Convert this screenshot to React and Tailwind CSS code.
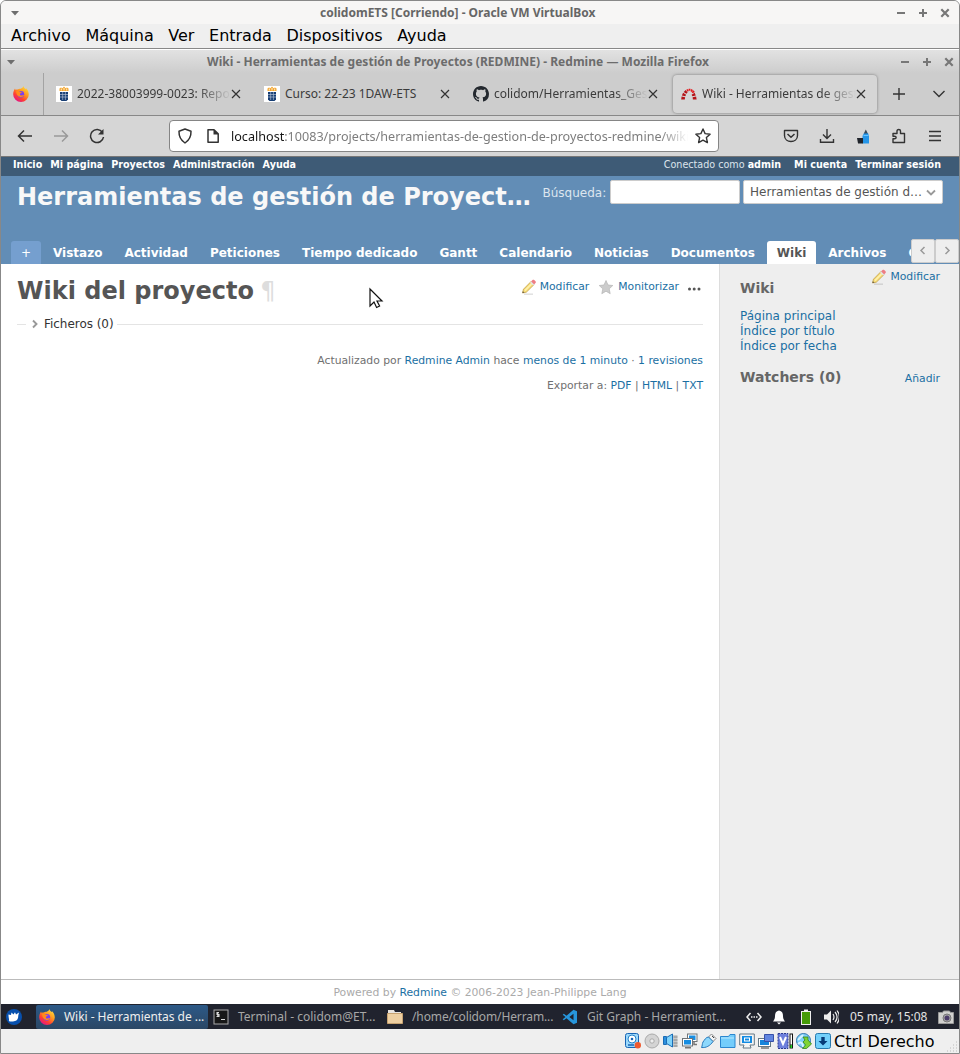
const noto = "font-['Noto_Sans',sans-serif]";

function Ico({ w = 16, h = 16, vb, className = '', children }) {
  return (
    <svg width={w} height={h} viewBox={vb || `0 0 ${w} ${h}`} className={`block shrink-0 ${className}`} fill="none">
      {children}
    </svg>
  );
}

function Caret() {
  return <Ico w={10} h={6}><path d="M1 1h8L5 5.400z" fill="#6e6e6e" /></Ico>;
}

function WindowButtons({ className = '' }) {
  return (
    <div className={`flex gap-3 ${className}`}>
      <Ico w={10} h={10}><path d="M1 5h8" stroke="#777" strokeWidth="2" /></Ico>
      <Ico w={10} h={10}><path d="M1 5h8M5 1v8" stroke="#777" strokeWidth="2" /></Ico>
      <Ico w={10} h={10}><path d="M1.300 1.300l7.400 7.400M8.700 1.300L1.300 8.700" stroke="#777" strokeWidth="2.200" /></Ico>
    </div>
  );
}

function Firefox({ size = 16 }) {
  return (
    <Ico w={size} h={size} vb="0 0 16 16">
      <defs>
        <linearGradient id="fox" x1="1" y1="0" x2="0.3" y2="1">
          <stop offset="0" stopColor="#fff04a" /><stop offset=".45" stopColor="#ff9a1f" /><stop offset=".75" stopColor="#ff4030" /><stop offset="1" stopColor="#e31587" />
        </linearGradient>
      </defs>
      <path d="M10.500 0c.3 1.400 1.100 2.100 2 3 .5-.2.6-.7.6-.7C14.700 4 15.800 6 15.800 8.500A7.800 7.500 0 0 1 .2 8.500C.1 6 1 4 2 2.500l.7 1.400c.6-.5 1.200-.5 1.800-.4C6 2.400 9.500 3.500 10.500 0z" fill="url(#fox)" />
      <circle cx="7.800" cy="8.300" r="3.400" fill="#7b3ff0" />
      <path d="M3 5c1.500-.5 3-.3 3.900.8l2.100.2c-.4 1-1.500 1-1.900 1.700-.4.900-.1 1.700 1.100 1.800 1.300.1 2-1 2.900-.4-.6 2-4 3.200-6 1C3.600 8.600 3.300 7 3 5z" fill="#ff8a1c" />
    </Ico>
  );
}

function Crest() {
  return (
    <Ico>
      <rect width="16" height="16" fill="#fff" />
      <path d="M3.500 5V2.500l1.500-1 1.500.7L8 .5l1.500 1.700 1.500-.7 1.500 1V5z" fill="#f3a52b" />
      <path d="M5.300 2.500v2M8 2v2.500M10.700 2.500v2" stroke="#fff" strokeWidth=".8" />
      <path d="M4 6h8v7.500L10.500 15h-5L4 13.500z" fill="#173e74" />
      <path d="M4 8.500h8M4 11h8M6.700 6v8M9.400 6v8" stroke="#c4cfdf" strokeWidth=".6" />
    </Ico>
  );
}

function Github() {
  return (
    <Ico vb="0 0 16 16"><path fill="#24292f" d="M8 0C3.580 0 0 3.580 0 8c0 3.540 2.290 6.530 5.470 7.590.4.070.550-.170.550-.380 0-.190-.010-.820-.010-1.490-2.010.370-2.530-.490-2.690-.940-.090-.230-.480-.940-.820-1.130-.280-.150-.680-.520-.010-.530.630-.010 1.080.580 1.230.820.720 1.210 1.870.870 2.330.660.070-.520.280-.870.510-1.070-1.780-.2-3.640-.890-3.640-3.950 0-.870.310-1.590.820-2.150-.080-.2-.360-1.020.080-2.120 0 0 .670-.210 2.200.820.640-.180 1.320-.270 2-.270s1.360.090 2 .270c1.530-1.040 2.200-.820 2.200-.820.440 1.100.160 1.920.080 2.120.510.560.820 1.270.820 2.150 0 3.070-1.870 3.750-3.650 3.950.290.250.540.730.540 1.480 0 1.070-.010 1.930-.010 2.200 0 .210.150.460.550.380A8.010 8.010 0 0 0 16 8c0-4.420-3.580-8-8-8z" /></Ico>
  );
}

function RedmineLogo() {
  return (
    <Ico>
      <path d="M.2 13.500l.4-3 3.500.8-.3 2.200zM.9 9.500l1.200-2.700 3 1.900-.8 1.500zM2.700 6l2-1.900 1.900 2.500-1.200 1.100zM11.900 13.500l-.3-2.200 3.500-.8.500 3zM11.400 10.200l-.8-1.500 3-1.900 1.200 2.700z" fill="#b51419" />
      <path d="M5.200 3.700l1.900-.8.700 2.200-1.200.6zM7.600 2.800h1.900l-.3 2h-1zM10 2.900l2 1-1.200 2-1.200-.7zM12.500 4.200l1.300 1.700-2.100 1.400-1-1.100z" fill="#e3191c" />
    </Ico>
  );
}

function CloseX() {
  return <Ico w={10} h={10}><path d="M1 1l8 8M9 1L1 9" stroke="#333" strokeWidth="1.200" /></Ico>;
}

const fade = '[mask-image:linear-gradient(to_right,#000_78%,transparent)]';

function BrowserTab({ icon, title, className, textWidth, faded }) {
  return (
    <div className={`flex h-[38px] shrink-0 items-center ${className}`}>
      {icon}
      <span className={`ml-[5px] overflow-hidden whitespace-nowrap text-[12px] leading-[18px] text-[#3b3b3b] ${textWidth} ${faded ? fade : ''}`}>{title}</span>
      <CloseX />
    </div>
  );
}

function Pencil() {
  return (
    <Ico>
      <path d="M3 15.200h9" stroke="#000" strokeOpacity=".12" strokeWidth="1.500" />
      <path d="M1.500 14l1-3.800L10 2.600l3 3-7.600 7.500z" fill="#f8df7c" stroke="#c09a3e" strokeWidth=".8" />
      <path d="M4 11.500l7.300-7.300" stroke="#fff3b5" strokeWidth="1.200" />
      <path d="M10 2.600L11.500 1c.5-.5 1.200-.5 1.700 0l1.300 1.300c.5.500.5 1.200 0 1.700L13 5.600z" fill="#ee7d83" />
      <path d="M9.600 3l3 3" stroke="#dfe3ea" strokeWidth="1.400" />
      <path d="M1.500 14l.4-1.700 1.300 1.300z" fill="#444" />
    </Ico>
  );
}

const projectTabs = ['Vistazo', 'Actividad', 'Peticiones', 'Tiempo dedicado', 'Gantt', 'Calendario', 'Noticias', 'Documentos', 'Wiki', 'Archivos', 'Configuración'];

function VmStatusIcons() {
  return (
    <div className="flex gap-[3px]">
      <Ico>
        <rect x=".5" y=".5" width="13" height="14" rx="2" fill="#9bd8fb" stroke="#1764b5" />
        <circle cx="7" cy="6" r="4" fill="#fff" stroke="#2581c8" /><circle cx="7" cy="6" r="1.300" fill="#1764b5" />
        <path d="M3 12h6" stroke="#1764b5" strokeWidth="1.500" /><circle cx="12.800" cy="12.300" r="3.200" fill="#ef5a2f" />
      </Ico>
      <Ico><circle cx="8" cy="8" r="7" fill="#d4d4d4" stroke="#aaa" /><circle cx="8" cy="8" r="2.200" fill="#eee" stroke="#aaa" /></Ico>
      <Ico>
        <path d="M9 2h5.500v12H8z" fill="#c6c9ca" /><path d="M10.500 4h4M10.500 7h4M10.500 10h4M10.500 13h4" stroke="#888" />
        <path d="M.5 3.500h3v8h-3z" fill="#2c8fdd" stroke="#1a6cb5" /><path d="M3.500 4.500l6-3.500v13l-6-3.500z" fill="#7fd3fb" stroke="#1a6cb5" />
      </Ico>
      <Ico>
        <rect x="5.500" y="1" width="9.500" height="7.500" fill="#fff" stroke="#6f7478" /><rect x="7" y="2.500" width="6.500" height="4.500" fill="#168de2" /><path d="M12 9v2.500h3" stroke="#777" strokeWidth="1.500" />
        <rect x=".5" y="5.500" width="10" height="7.500" fill="#fff" stroke="#6f7478" /><rect x="2" y="7" width="7" height="4.500" fill="#168de2" /><path d="M3 14.700h6" stroke="#777" strokeWidth="1.600" />
      </Ico>
      <Ico><path d="M10.500 1L15 5.500l-3 3L7.500 4z" fill="#f3f3f3" stroke="#888" /><path d="M7.500 4C5 4 3.500 7 2 9c-1 2-.5 3.500-1.500 5.500C5 15 9 13 12 8.500z" fill="#8dd8fc" stroke="#2779bd" /><path d="M11 3l.9.900M13 5l-.9-.9" stroke="#333" /></Ico>
      <Ico><path d="M.5 14.500V3.500h8l1.500-2h5v13z" fill="#74cdfb" stroke="#2b86cf" /><path d="M1 5h13" stroke="#b9e8ff" /></Ico>
      <Ico><path d="M.7 1h14.600v11H11l1 3H4l1-3H.7z" fill="#f5f5f5" stroke="#667985" /><rect x="3" y="3" width="10" height="7" fill="#138be2" /><rect x="5.500" y="5" width="5" height="3" fill="#138be2" stroke="#fff" /></Ico>
      <Ico><rect x=".5" y="5.500" width="12" height="8" fill="#fff" stroke="#667985" /><rect x="2" y="7" width="9" height="5" fill="#1685db" /><path d="M3 15h8" stroke="#777" strokeWidth="1.500" /><path d="M6.500 1.500h9v7h-9z" fill="#6286e0" stroke="#3851a9" /></Ico>
      <Ico><rect x="1" y=".5" width="10" height="15" fill="#6d7fdc" stroke="#2c3b91" strokeDasharray="2 1" /><path d="M3 4l3 7 3-7" stroke="#fff" strokeWidth="2" /><rect x="12.500" y=".5" width="3.500" height="15" fill="#111" /><rect x="13.500" y="1.500" width="1.500" height="10" fill="#fff" /><rect x="13.500" y="12" width="1.500" height="3" fill="#20d820" /></Ico>
      <Ico><circle cx="7.500" cy="7.500" r="7" fill="#7fd0f8" stroke="#3276ad" /><path d="M7 2c-2 2-3 3-5 5M2 11c3-3 5-1 5 3" stroke="#d6f2ff" strokeWidth="2" /><path d="M7 4h5v3l3.500 4-5 4.500H6.500L9.500 12 7 9l2-2z" fill="#80d334" stroke="#2f841d" strokeWidth=".8" /></Ico>
      <Ico><rect x=".5" y=".5" width="15" height="15" rx="2" fill="#74d0fb" stroke="#2779ae" /><path d="M6.300 4h3.400v4h2.800L8 12.500 3.500 8h2.800z" fill="#073b78" /></Ico>
    </div>
  );
}

function TaskLabel({ children, className }) {
  return <span className={`whitespace-nowrap text-[12px] leading-[18px] ${className}`}>{children}</span>;
}

export default function App() {
  return (
    <div className="h-[1054px] w-[960px] overflow-hidden bg-white">
      <div className="flex h-[1054px] w-[960px] flex-col overflow-hidden rounded-t-[6px] border border-[#888] bg-[#efefef] font-['DejaVu_Sans',sans-serif]">
        <div className={`flex h-[23px] shrink-0 items-center bg-[#f7f6f5] pl-[9px] pt-px ${noto}`}>
          <Caret />
          <span className="ml-[300px] whitespace-nowrap text-[12px] font-bold leading-[18px] text-[#666]">colidomETS [Corriendo] - Oracle VM VirtualBox</span>
          <WindowButtons className="ml-auto mr-[9px]" />
        </div>
        <div className="flex h-[25px] shrink-0 items-center gap-[14.600px] border-b border-[#888] pb-px pl-[10px] text-[16px] leading-5 text-black">
          <span>Archivo</span><span>Máquina</span><span>Ver</span><span>Entrada</span><span>Dispositivos</span><span>Ayuda</span>
        </div>
        <div className={`flex h-[24px] shrink-0 items-center border-t border-white bg-gradient-to-b from-[#e2e2e2] to-[#cdcdcd] pl-[5px] ${noto}`}>
          <Caret />
          <span className="ml-[191px] whitespace-nowrap text-[12px] font-bold leading-[18px] tracking-[0.025px] text-[#6c6c6c]">Wiki - Herramientas de gestión de Proyectos (REDMINE) - Redmine — Mozilla Firefox</span>
          <WindowButtons className="ml-auto mr-[5px]" />
        </div>
        <div className={`flex h-[43px] shrink-0 items-center border-b border-[#888] bg-[#cdcdcd] ${noto}`}>
          <div className="flex h-[42px] w-[43px] items-center border-r border-[#a3a3a3] pl-[12px]"><Firefox /></div>
          <BrowserTab icon={<Crest />} title="2022-38003999-0023: Repositorio" className="w-[208px] pl-[12px]" textWidth="w-[154px]" faded />
          <BrowserTab icon={<Crest />} title="Curso: 22-23 1DAW-ETS" className="w-[209px] pl-[12px]" textWidth="w-[155px]" />
          <BrowserTab icon={<Github />} title="colidom/Herramientas_Gestion" className="w-[212px] pl-[12px]" textWidth="w-[154px]" faded />
          <BrowserTab icon={<RedmineLogo />} title="Wiki - Herramientas de gestión" className="w-[204px] rounded bg-[#d6d6d6] pl-[8px] shadow-[0_0_3px_#777]" textWidth="w-[154px]" faded />
          <Ico className="ml-[14px]"><path d="M8 2v12M2 8h12" stroke="#333" strokeWidth="1.400" /></Ico>
          <Ico className="ml-[24px]"><path d="M2.500 5L8 10.500 13.500 5" stroke="#333" strokeWidth="1.400" /></Ico>
        </div>
        <div className="flex h-[41px] shrink-0 items-center border-b border-[#777] bg-[#d6d6d6]">
          <Ico className="ml-[16px]"><path d="M15 8H2M7 2.500L1.500 8 7 13.500" stroke="#333" strokeWidth="1.500" /></Ico>
          <Ico className="ml-5"><path d="M1 8h13M9 2.500L14.500 8 9 13.500" stroke="#999" strokeWidth="1.500" /></Ico>
          <Ico className="ml-5"><path d="M13.500 4.500A6.500 6.500 0 1 0 14.500 9" stroke="#333" strokeWidth="1.500" /><path d="M14.500 1v5.500H9z" fill="#333" /></Ico>
          <div className="ml-[64px] flex h-8 w-[550px] items-center rounded-[4px] border border-[#858585] bg-white pl-[7px]">
            <Ico><path d="M8 1l6 2.300c.2 5-1.500 8.700-6 11.700C3.500 12 1.800 8.300 2 3.300z" stroke="#333" strokeWidth="1.500" strokeLinejoin="round" /></Ico>
            <Ico className="ml-3"><path d="M3 1.700h6l4.200 4.200v8.400H3z" stroke="#333" strokeWidth="1.500" strokeLinejoin="round" /><path d="M8.500 1.500v5h5z" fill="#333" /></Ico>
            <span className={`ml-[10px] w-[457px] overflow-hidden whitespace-nowrap pt-px text-[12.600px] leading-5 text-[#7d7d7d] [mask-image:linear-gradient(to_right,#000_94%,transparent)] ${noto}`}><span className="text-[#151515]">localhost</span>:10083/projects/herramientas-de-gestion-de-proyectos-redmine/wiki</span>
            <Ico className="ml-[7px]"><path d="M8 1l2.100 4.600 5 .6-3.700 3.400 1 5L8 12.100l-4.400 2.500 1-5L.9 6.200l5-.6z" stroke="#333" strokeWidth="1.400" strokeLinejoin="round" /></Ico>
          </div>
          <Ico className="ml-[64px]"><path d="M1.500 2.500h13v5c0 8-13 8-13 0z" stroke="#333" strokeWidth="1.400" strokeLinejoin="round" /><path d="M4.500 6L8 9.300 11.500 6" stroke="#333" strokeWidth="1.500" /></Ico>
          <Ico className="ml-5"><path d="M8 1v9M4 6.500l4 4 4-4M1.500 11v3.300h13V11" stroke="#333" strokeWidth="1.400" /></Ico>
          <Ico className="ml-5"><path d="M7.500 15.500V8L9 5h4l1 3v7.500z" fill="#2495e8" /><path d="M10.800 1.500l2 4h-4z" fill="#384858" /><path d="M2 10h6v5.500H3z" fill="#20242b" /><path d="M8.500 7.500h5" stroke="#69c3ff" /></Ico>
          <Ico className="ml-5"><path d="M2 5.500h4V3c0-2 3.500-2 3.500 0v2.500h4v9H2v-3.700h1.500c2.200 0 2.200-2.600 0-2.600H2z" stroke="#333" strokeWidth="1.400" strokeLinejoin="round" /></Ico>
          <Ico className="ml-5"><path d="M2 3.500h12M2 8h12M2 12.500h12" stroke="#333" strokeWidth="1.400" /></Ico>
        </div>
        <div className="flex h-[19px] shrink-0 items-start gap-[8px] bg-[#3e5b76] pl-3 pr-[18px] text-[9.600px] font-bold leading-[15px] text-white">
          <span>Inicio</span><span>Mi página</span><span>Proyectos</span><span>Administración</span><span>Ayuda</span>
          <span className="ml-auto mr-[5px] font-normal text-[#dce4ec]">Conectado como <b className="text-white">admin</b></span><span>Mi cuenta</span><span>Terminar sesión</span>
        </div>
        <div className="relative flex h-[88px] shrink-0 flex-col justify-between overflow-hidden bg-[#628db6]">
          <div className="flex items-start pl-4 pt-[4px]">
            <h1 className="w-[525.500px] whitespace-nowrap pt-px text-[24px] font-bold leading-[32px] text-[#f8f8f8]">Herramientas de gestión de Proyect…</h1>
            <span className="w-[67.500px] pt-px text-[12px] leading-[25px] text-[#dce6ef]">Búsqueda:</span>
            <div className="h-6 w-[130px] rounded-[2px] border border-[#ccc] bg-white" />
            <div className="ml-[3px] flex h-6 w-[200px] items-center rounded-[2px] border border-[#ccc] bg-white pl-[6px] text-[12px] text-[#555]">
              <span className="w-[175px] whitespace-nowrap">Herramientas de gestión d…</span>
              <Ico w={12} h={12}><path d="M2 4.500l4 4 4-4" stroke="#999" strokeWidth="1.800" /></Ico>
            </div>
          </div>
          <div className="flex h-[23px] gap-[2px] pl-[10px] text-[12px] font-bold leading-[24px] text-white">
            <span className="w-[30px] shrink-0 rounded-t-[3px] bg-[#759fcf] text-center font-normal">+</span>
            {projectTabs.map((t) => (
              <span key={t} className={`shrink-0 rounded-t-[3px] px-[10px] ${t === 'Wiki' ? 'bg-white text-[#555]' : ''}`}>{t}</span>
            ))}
          </div>
          <div className="absolute bottom-[1px] right-0 flex h-6 w-[48px]">
            <div className="flex w-6 items-center justify-center rounded-[2px] border border-[#ccc] bg-[#eee]"><Ico w={10} h={10}><path d="M6.500 1L3 4.500 6.500 8" stroke="#999" strokeWidth="1.500" /></Ico></div>
            <div className="flex w-6 items-center justify-center rounded-[2px] border border-[#ccc] bg-[#eee]"><Ico w={10} h={10}><path d="M3.500 1L7 4.500 3.500 8" stroke="#999" strokeWidth="1.500" /></Ico></div>
          </div>
        </div>
        <div className="flex h-[715px] shrink-0">
          <main className="relative w-[718px] shrink-0 bg-white pl-4 pr-[16px] pt-[11px]">
            <div className="flex h-8 items-start">
              <h2 className="whitespace-nowrap text-[24px] font-bold leading-8 text-[#555]">Wiki del proyecto <span className="-ml-[2px] font-normal text-[#ddd]">¶</span></h2>
              <div className="ml-auto flex h-6 items-center text-[10.800px] text-[#1a6fa3]">
                <Pencil /><span className="ml-[3px] mr-[9px]">Modificar</span>
                <Ico className="-mt-px"><path d="M8 1.500l2 4.500 4.800.5-3.600 3.300 1 4.900L8 12.200l-4.200 2.500 1-4.900L1.200 6.500 6 6z" fill="#ccc" stroke="#b5b5b5" strokeWidth=".7" /></Ico>
                <span className="ml-[4px] mr-[8px]">Monitorizar</span>
                <Ico w={16} h={16}><circle cx="2.500" cy="10" r="1.500" fill="#555" /><circle cx="7.200" cy="10" r="1.500" fill="#555" /><circle cx="12" cy="10" r="1.500" fill="#555" /></Ico>
              </div>
            </div>
            <div className="mt-[8px] flex h-[18px] items-center text-[12px] text-[#333]">
              <div className="w-[9px] border-t border-[#e4e4e4]" />
              <Ico w={10} h={10} className="ml-[4px] mr-1"><path d="M3 1.500L6.500 5 3 8.500" stroke="#999" strokeWidth="1.900" /></Ico>
              <span className="mr-[3px] tracking-[-0.040px]">Ficheros (0)</span><div className="flex-1 border-t border-[#e4e4e4]" />
            </div>
            <p className="mt-[20px] text-right text-[10.800px] leading-[15px] text-[#707070]">Actualizado por <span className="text-[#1a6fa3]">Redmine Admin</span> hace <span className="text-[#1a6fa3]">menos de 1 minuto</span> · <span className="text-[#1a6fa3]">1 revisiones</span></p>
            <p className="mt-[10px] text-right text-[10.800px] leading-[15px] text-[#707070]">Exportar a: <span className="text-[#1a6fa3]">PDF</span> | <span className="text-[#1a6fa3]">HTML</span> | <span className="text-[#1a6fa3]">TXT</span></p>
            <svg className="absolute left-[367px] top-[23px]" width="16" height="23" viewBox="0 0 16 23"><path d="M2 2v17l4-4 2.600 5.500 3-1.500L9 14h5z" fill="#fff" stroke="#111" strokeWidth="1.200" /></svg>
          </main>
          <aside className="flex-1 border-l border-[#ddd] bg-[#eee] pl-5 pr-[19px] pt-[5px] text-[12px] text-[#1a6fa3]">
            <div className="flex h-4 items-center justify-end text-[10.800px]"><Pencil /><span className="ml-[3px]">Modificar</span></div>
            <h3 className="-mt-[6px] text-[14px] font-bold leading-[18px] text-[#666]">Wiki</h3>
            <div className="mt-[12px] leading-[15px]"><p>Página principal</p><p>Índice por título</p><p>Índice por fecha</p></div>
            <div className="mt-[14px] flex h-[20px] items-start justify-between"><h3 className="text-[14px] font-bold leading-[18px] text-[#666]">Watchers (0)</h3><span className="mt-[3px] text-[10.800px] leading-4">Añadir</span></div>
          </aside>
        </div>
        <footer className="h-[25px] shrink-0 border-t border-[#bbb] bg-white text-center text-[10.800px] leading-[26px] text-[#aaa]">Powered by <span className="text-[#1a6fa3]">Redmine</span> © 2006-2023 Jean-Philippe Lang</footer>
        <div className={`flex h-[25px] shrink-0 items-center bg-[#20232e] pl-[5px] ${noto}`}>
          <Ico><circle cx="8" cy="8" r="8" fill="#0750ae" /><path d="M2.500 5.500l2.500.5.500-2.500 2 2 1.500-2.300L10 5.500l3-2-.8 3.500c.3 3.500-2.200 5.500-5.200 5.500-2 0-3.500.5-4.200-1C3.500 10 2.300 8.500 2.500 5.500z" fill="#fff" /></Ico>
          <div className="ml-[14px] flex h-[24px] w-[172px] items-center rounded-[2px] bg-gradient-to-b from-[#2c5987] to-[#2b4765] pl-[3px]"><Firefox /><TaskLabel className="ml-[9px] tracking-[-0.040px] text-[#eee]">Wiki - Herramientas de ...</TaskLabel></div>
          <Ico className="ml-[5px]"><rect x="1" y="1" width="14" height="14" fill="#171717" stroke="#aaa" /><path d="M6 3.500H4v2h2v2H3.500M4.800 3v5M8 10.500h4" stroke="#ddd" strokeWidth="1.100" /></Ico>
          <TaskLabel className="ml-[9px] w-[149px] text-[#a7a7a7]">Terminal - colidom@ET...</TaskLabel>
          <Ico><path d="M1 14V1h6l1 2h6v11z" fill="#e9e5df" /><path d="M.5 4.500h15v10H.5z" fill="#eed0a2" stroke="#c7a371" /></Ico>
          <TaskLabel className="ml-[9px] w-[150px] tracking-[-0.120px] text-[#a7a7a7]">/home/colidom/Herram...</TaskLabel>
          <Ico><path d="M11.500.8L15 2.300v11.400l-3.500 1.500-7-6-2.700 2L.7 10.300 3.500 8 .7 5.700l1.100-1 2.700 2zM11.500 4.700L7.300 8l4.200 3.300z" fill="#2796dc" /></Ico>
          <TaskLabel className="ml-[9px] w-[159px] text-[#a7a7a7]">Git Graph - Herramient...</TaskLabel>
          <Ico><path d="M4.500 4L1 8l3.500 4M11.500 4L15 8l-3.500 4" stroke="#eee" strokeWidth="1.500" /><path d="M5 8h1.500M7.500 8H9M10 8h1.500" stroke="#eee" strokeWidth="1.500" /></Ico>
          <Ico className="ml-[9px]"><path d="M8 1.500c3 .5 4 2.500 4 5.500 0 3 1 4 2 5.500H2c1-1.500 2-2.500 2-5.500 0-3 1-5 4-5.500zM6 13.500h4L8 15.500z" fill="#fff" /></Ico>
          <Ico className="ml-[11px]"><path d="M6 .5h4v2H6z" fill="#eee" /><rect x="3.500" y="2.500" width="9" height="13" fill="#459b08" stroke="#eee" /></Ico>
          <Ico className="ml-[9px]"><path d="M1 5.500h3l4-4v13l-4-4H1z" fill="#eee" /><path d="M10 5c1.300 2 1.300 4 0 6M12 3c2.500 3 2.500 7 0 10M14 1.500c3 4 3 9 0 13" stroke="#eee" strokeWidth="1.200" /></Ico>
          <TaskLabel className="ml-[11px] w-[88px] text-[#e4e4e4]">05 may, 15:08</TaskLabel>
          <Ico><path d="M.5 3.500h4l1-1.500h6l1 1.500h3v11H.5z" fill="#d1d1cf" stroke="#999" /><circle cx="9" cy="9" r="4" fill="#aaa" stroke="#777" /><circle cx="9" cy="9" r="2.500" fill="#4b3c69" /></Ico>
        </div>
        <div className="relative flex h-[24px] shrink-0 items-center justify-end bg-[#efefef] pr-[24.500px]">
          <VmStatusIcons /><span className="ml-[3px] whitespace-nowrap pt-px text-[16px] leading-6 text-black">Ctrl Derecho</span>
          <Ico w={12} h={12} className="absolute bottom-[1px] right-[1px]"><path d="M1 11h11M4 8h8M7 5h5M10 2h2" stroke="#bbb" strokeWidth="1" strokeDasharray="1 2" /></Ico>
        </div>
      </div>
    </div>
  );
}
